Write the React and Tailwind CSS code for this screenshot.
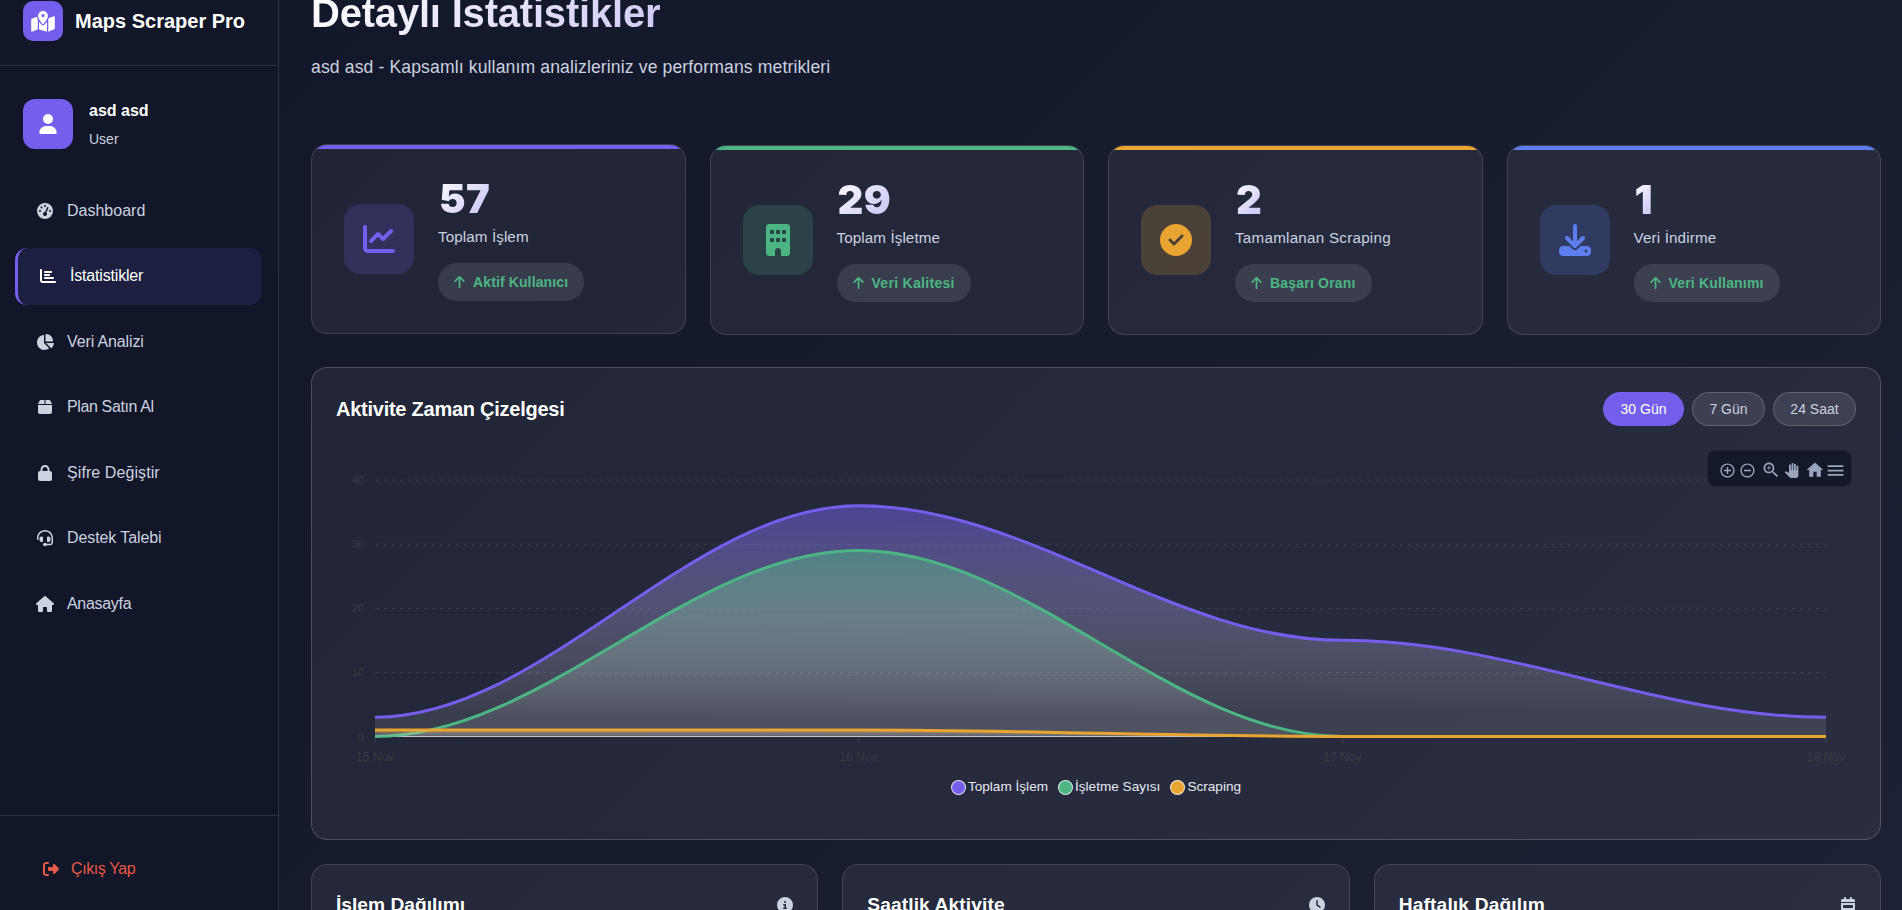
import React from "react";
import {
  FaMapLocationDot,
  FaUser,
  FaGaugeHigh,
  FaChartBar,
  FaChartPie,
  FaBox,
  FaLock,
  FaHeadset,
  FaHouse,
  FaRightFromBracket,
  FaChartLine,
  FaBuilding,
  FaCircleCheck,
  FaDownload,
  FaArrowUp,
  FaCircleInfo,
  FaClock,
  FaCalendarWeek,
} from "react-icons/fa6";

const navItems = [
  { label: "Dashboard", icon: FaGaugeHigh, tracking: "" },
  { label: "İstatistikler", icon: FaChartBar, active: true, tracking: "tracking-[-0.18px]" },
  { label: "Veri Analizi", icon: FaChartPie, tracking: "tracking-[-0.13px]" },
  { label: "Plan Satın Al", icon: FaBox, tracking: "tracking-[-0.37px]" },
  { label: "Şifre Değiştir", icon: FaLock, tracking: "tracking-[0.08px]" },
  { label: "Destek Talebi", icon: FaHeadset, tracking: "tracking-[-0.1px]" },
  { label: "Anasayfa", icon: FaHouse, tracking: "tracking-[-0.3px]" },
];

const stats = [
  { value: "57", label: "Toplam İşlem", trend: "Aktif Kullanıcı", icon: FaChartLine, bar: "bg-[#735feb]", tile: "bg-[#735feb]/20 text-[#735feb]", lift: "-mt-px mb-px", tracking: "tracking-[0.1px]", trendTracking: "tracking-[0.12px]" },
  { value: "29", label: "Toplam İşletme", trend: "Veri Kalitesi", icon: FaBuilding, bar: "bg-[#4cb583]", tile: "bg-[#4cb583]/20 text-[#4cb583]", lift: "", tracking: "tracking-[0.1px]", trendTracking: "tracking-[0.3px]" },
  { value: "2", label: "Tamamlanan Scraping", trend: "Başarı Oranı", icon: FaCircleCheck, bar: "bg-[#e8a531]", tile: "bg-[#e8a531]/20 text-[#e8a531]", lift: "", tracking: "tracking-[0.25px]", trendTracking: "tracking-[0.2px]" },
  { value: "1", label: "Veri İndirme", trend: "Veri Kullanımı", icon: FaDownload, bar: "bg-[#5e7ef0]", tile: "bg-[#5e7ef0]/20 text-[#5e7ef0]", lift: "", tracking: "tracking-[0.15px]", trendTracking: "tracking-[0.18px]" },
];

const panels = [
  { title: "İşlem Dağılımı", icon: FaCircleInfo, tracking: "" },
  { title: "Saatlik Aktivite", icon: FaClock, tracking: "tracking-[0.1px]" },
  { title: "Haftalık Dağılım", icon: FaCalendarWeek, tracking: "tracking-[0.15px]" },
];

const legend = [
  { label: "Toplam İşlem", color: "bg-[#735feb]" },
  { label: "İşletme Sayısı", color: "bg-[#4cb583]" },
  { label: "Scraping", color: "bg-[#e8a531]" },
];

function Sidebar() {
  return (
    <aside className="flex h-full w-[279px] shrink-0 flex-col border-r border-white/12 bg-[#111628]">
      <div className="flex h-[66px] shrink-0 items-start gap-3 border-b border-white/12 pl-[23px] pt-px">
        <div className="flex size-10 items-center justify-center rounded-[10px] bg-[#735feb] text-white">
          <FaMapLocationDot className="h-[21px] w-6" />
        </div>
        <div className="text-xl font-bold leading-10 text-white">Maps Scraper Pro</div>
      </div>
      <div className="mt-[33px] flex h-[50px] items-center gap-4 pl-[23px]">
        <div className="flex size-[50px] items-center justify-center rounded-xl bg-[#735feb] text-white">
          <FaUser className="size-5" />
        </div>
        <div className="pt-0.5">
          <div className="text-base font-bold leading-6 text-white">asd asd</div>
          <div className="pt-1 text-sm leading-6 text-[#cbd2e0]">User</div>
        </div>
      </div>
      <nav className="mt-[33px] flex flex-1 flex-col gap-[8.6px] pl-[15px] pr-4">
        {navItems.map(({ label, icon: Icon, active, tracking }) => (
          <div
            key={label}
            className={
              active
                ? "flex h-[57px] items-center gap-[13px] rounded-xl border-l-[3px] border-[#735feb] bg-[#735feb]/12 pl-[21px] text-white"
                : "flex h-[57px] items-center gap-[13px] pl-[21px] text-[#cbd2e0]"
            }
          >
            <Icon className="h-4 w-[18px]" />
            <span className={tracking}>{label}</span>
          </div>
        ))}
      </nav>
      <div className="flex h-[95px] shrink-0 items-center border-t border-white/12 pl-[42px] pt-3">
        <div className="flex items-center gap-[11px] text-[#e55a46]">
          <FaRightFromBracket className="h-4 w-[18px]" />
          <span className="tracking-[-0.4px]">Çıkış Yap</span>
        </div>
      </div>
    </aside>
  );
}

function StatCard({ value, label, trend, icon: Icon, bar, tile, lift, tracking, trendTracking }) {
  return (
    <div className={`relative h-[190px] overflow-hidden rounded-2xl border border-white/12 bg-white/6 ${lift}`}>
      <div className={`h-1 ${bar}`} />
      <div className="-mt-1 flex h-full items-center gap-6 pl-8">
        <div className={`flex size-[70px] shrink-0 items-center justify-center rounded-2xl ${tile}`}>
          <Icon className="size-8" />
        </div>
        <div className="flex flex-col items-start">
          <div className="bg-linear-135 from-white to-[#c4c0f5] bg-clip-text pl-px pt-[2px] font-[Inter] text-[40px] font-black leading-10 tracking-[0.4px] text-transparent">
            {value}
          </div>
          <div className={`mt-[6px] text-[15.2px] leading-6 text-[#cbd2e0] ${tracking}`}>{label}</div>
          <div className={`mt-[14px] flex h-[38px] items-center gap-2 rounded-full bg-white/10 px-4 text-sm font-bold text-[#4cb583] ${trendTracking}`}>
            <FaArrowUp className="h-[14px] w-[11px]" />
            <span>{trend}</span>
          </div>
        </div>
      </div>
    </div>
  );
}

const X = [0, 483.7, 967.3, 1451];
const toY = (v) => 256.5 - v * 6.41;

function smoothPath(values) {
  let d = `M${X[0]} ${toY(values[0])}`;
  for (let i = 1; i < values.length; i++) {
    const len = (X[i] - X[i - 1]) * 0.35;
    d += ` C${X[i - 1] + len} ${toY(values[i - 1])} ${X[i] - len} ${toY(values[i])} ${X[i]} ${toY(values[i])}`;
  }
  return d;
}

const series = [
  { id: "total", color: "#735feb", values: [3, 36, 15, 3] },
  { id: "business", color: "#4cb583", values: [0, 29, 0, 0] },
  { id: "scraping", color: "#e8a531", values: [1, 1, 0, 0] },
];

function TimelineChart() {
  return (
    <svg width="1568" height="300" viewBox="-63 -10 1568 300" className="block overflow-visible">
      <defs>
        {series.map((s) => (
          <linearGradient key={s.id} id={s.id} x1="0" y1="0" x2="0" y2="1">
            <stop offset="0" stopColor={s.color} stopOpacity="0.5" />
            <stop offset="0.9" stopColor="#ffffff" stopOpacity="0.1" />
            <stop offset="1" stopColor="#ffffff" stopOpacity="0.1" />
          </linearGradient>
        ))}
      </defs>
      {[40, 30, 20, 10].map((v) => (
        <line key={v} x1="0" x2="1451" y1={toY(v)} y2={toY(v)} stroke="#ffffff" strokeOpacity="0.1" strokeDasharray="4" />
      ))}
      {[40, 30, 20, 10, 0].map((v) => (
        <text key={v} x="-11" y={toY(v) + 4} textAnchor="end" fontSize="11" fill="#373d3f">
          {v}
        </text>
      ))}
      {X.map((x, i) => (
        <g key={x}>
          <line x1={x} x2={x} y1="257" y2="263" stroke="#ffffff" strokeOpacity="0.12" />
          <text x={x} y="281" textAnchor="middle" fontSize="12" fill="#373d3f">
            {`${15 + i} Nov`}
          </text>
        </g>
      ))}
      <line x1="0" x2="1451" y1="256.5" y2="256.5" stroke="#e0e0e0" strokeOpacity="0.8" />
      {series.map((s) => (
        <g key={s.id}>
          <path d={`${smoothPath(s.values)} L1451 256.5 L0 256.5 Z`} fill={`url(#${s.id})`} />
          <path d={smoothPath(s.values)} fill="none" stroke={s.color} strokeWidth="3" />
        </g>
      ))}
    </svg>
  );
}

function Tool({ d, size }) {
  return (
    <svg viewBox="0 0 24 24" className={`shrink-0 fill-[#9aa4ba] ${size}`}>
      {d.map((p) => (
        <path key={p} d={p} />
      ))}
    </svg>
  );
}

function Toolbar() {
  return (
    <div className="absolute right-[28px] top-[82px] flex h-[37px] w-[145px] items-center rounded-lg border border-white/5 bg-[#14182b] pl-[10px] pt-[3px]">
      <Tool size="size-[17px] ml-px" d={["M13 7h-2v4H7v2h4v4h2v-4h4v-2h-4V7zm-1-5C6.48 2 2 6.48 2 12s4.48 10 10 10 10-4.48 10-10S17.52 2 12 2zm0 18c-4.41 0-8-3.59-8-8s3.59-8 8-8 8 3.59 8 8-3.59 8-8 8z"]} />
      <Tool size="size-[17px] ml-[3px]" d={["M7 11v2h10v-2H7zm5-9C6.48 2 2 6.48 2 12s4.48 10 10 10 10-4.48 10-10S17.52 2 12 2zm0 18c-4.41 0-8-3.59-8-8s3.59-8 8-8 8 3.59 8 8-3.59 8-8 8z"]} />
      <Tool size="size-5 ml-[5px]" d={["M15.5 14h-.79l-.28-.27C15.41 12.59 16 11.11 16 9.5 16 5.91 13.09 3 9.5 3S3 5.91 3 9.5 5.91 16 9.5 16c1.61 0 3.09-.59 4.23-1.57l.27.28v.79l5 4.99L20.49 19l-4.99-5zm-6 0C7.01 14 5 11.99 5 9.5S7.01 5 9.5 5 14 7.01 14 9.5 11.99 14 9.5 14z", "M12 10h-2v2H9v-2H7V9h2V7h1v2h2v1z"]} />
      <Tool size="size-[15px] ml-[3px]" d={["M23 5.5V20c0 2.2-1.8 4-4 4h-7.3c-1.08 0-2.1-.43-2.85-1.19L1 14.83s1.26-1.23 1.3-1.25c.22-.19.49-.29.79-.29.22 0 .42.06.6.16.04.01 4.31 2.46 4.31 2.46V4c0-.83.67-1.5 1.5-1.5S11 3.17 11 4v7h1V1.5c0-.83.67-1.5 1.5-1.5S15 .67 15 1.5V11h1V2.5c0-.83.67-1.5 1.5-1.5s1.5.67 1.5 1.5V11h1V5.5c0-.83.67-1.5 1.5-1.5s1.5.67 1.5 1.5z"]} />
      <Tool size="size-5 ml-[6px]" d={["M10 20v-6h4v6h5v-8h3L12 3 2 12h3v8z"]} />
      <Tool size="size-[21px]" d={["M3 18h18v-2H3v2zm0-5h18v-2H3v2zm0-7v2h18V6H3z"]} />
    </div>
  );
}

function TimelineCard() {
  return (
    <section className="relative mt-8 h-[473px] shrink-0 rounded-2xl border border-white/18 bg-white/6">
      <div className="flex items-center justify-between px-6 pt-6">
        <h2 className="text-xl font-bold leading-[34px] tracking-[-0.25px] text-white">Aktivite Zaman Çizelgesi</h2>
        <div className="flex gap-2 text-sm">
          <button className="h-[34px] w-[81px] rounded-full border border-[#735feb] bg-[#735feb] text-white">30 Gün</button>
          <button className="h-[34px] w-[73px] rounded-full border border-white/18 bg-white/10 text-[#cbd2e0]">7 Gün</button>
          <button className="h-[34px] w-[83px] rounded-full border border-white/18 bg-white/10 text-[#cbd2e0]">24 Saat</button>
        </div>
      </div>
      <div className="mt-11">
        <TimelineChart />
      </div>
      <Toolbar />
      <div className="mt-[7px] flex justify-center gap-[10px] text-[13.6px] leading-5 text-[#e6e8f2]">
        {legend.map(({ label, color }) => (
          <div key={label} className="flex items-center gap-[2px]">
            <span className={`size-[15px] rounded-full border border-white/80 ${color}`} />
            <span>{label}</span>
          </div>
        ))}
      </div>
    </section>
  );
}

export default function App() {
  return (
    <div className="flex h-[910px] w-[1902px] overflow-hidden bg-linear-135 from-[#111628] to-[#1d2135] font-['Liberation_Sans',Arial,sans-serif] text-base">
      <Sidebar />
      <main className="flex min-w-0 flex-1 flex-col pl-8 pr-[21px]">
        <header className="h-[145px] shrink-0">
          <h1 className="-mt-[11px] w-fit bg-linear-135 from-white to-[#cfcaf6] bg-clip-text text-[40px] font-bold leading-[48px] tracking-[-0.2px] text-transparent">
            Detaylı İstatistikler
          </h1>
          <p className="mt-[18px] text-[17.6px] leading-6 tracking-[0.12px] text-[#cbd2e0]">
            asd asd - Kapsamlı kullanım analizleriniz ve performans metrikleri
          </p>
        </header>
        <div className="grid h-[190px] shrink-0 grid-cols-4 gap-6">
          {stats.map((s) => (
            <StatCard key={s.label} {...s} />
          ))}
        </div>
        <TimelineCard />
        <div className="mt-6 grid shrink-0 grid-cols-3 gap-6">
          {panels.map(({ title, icon: Icon, tracking }) => (
            <section key={title} className="h-[400px] rounded-2xl border border-white/12 bg-white/6 px-6 pt-6">
              <div className="flex items-center justify-between">
                <h2 className={`text-[19.2px] font-bold leading-8 text-white ${tracking}`}>{title}</h2>
                <Icon className="size-4 text-[#cbd2e0]" />
              </div>
            </section>
          ))}
        </div>
      </main>
    </div>
  );
}
